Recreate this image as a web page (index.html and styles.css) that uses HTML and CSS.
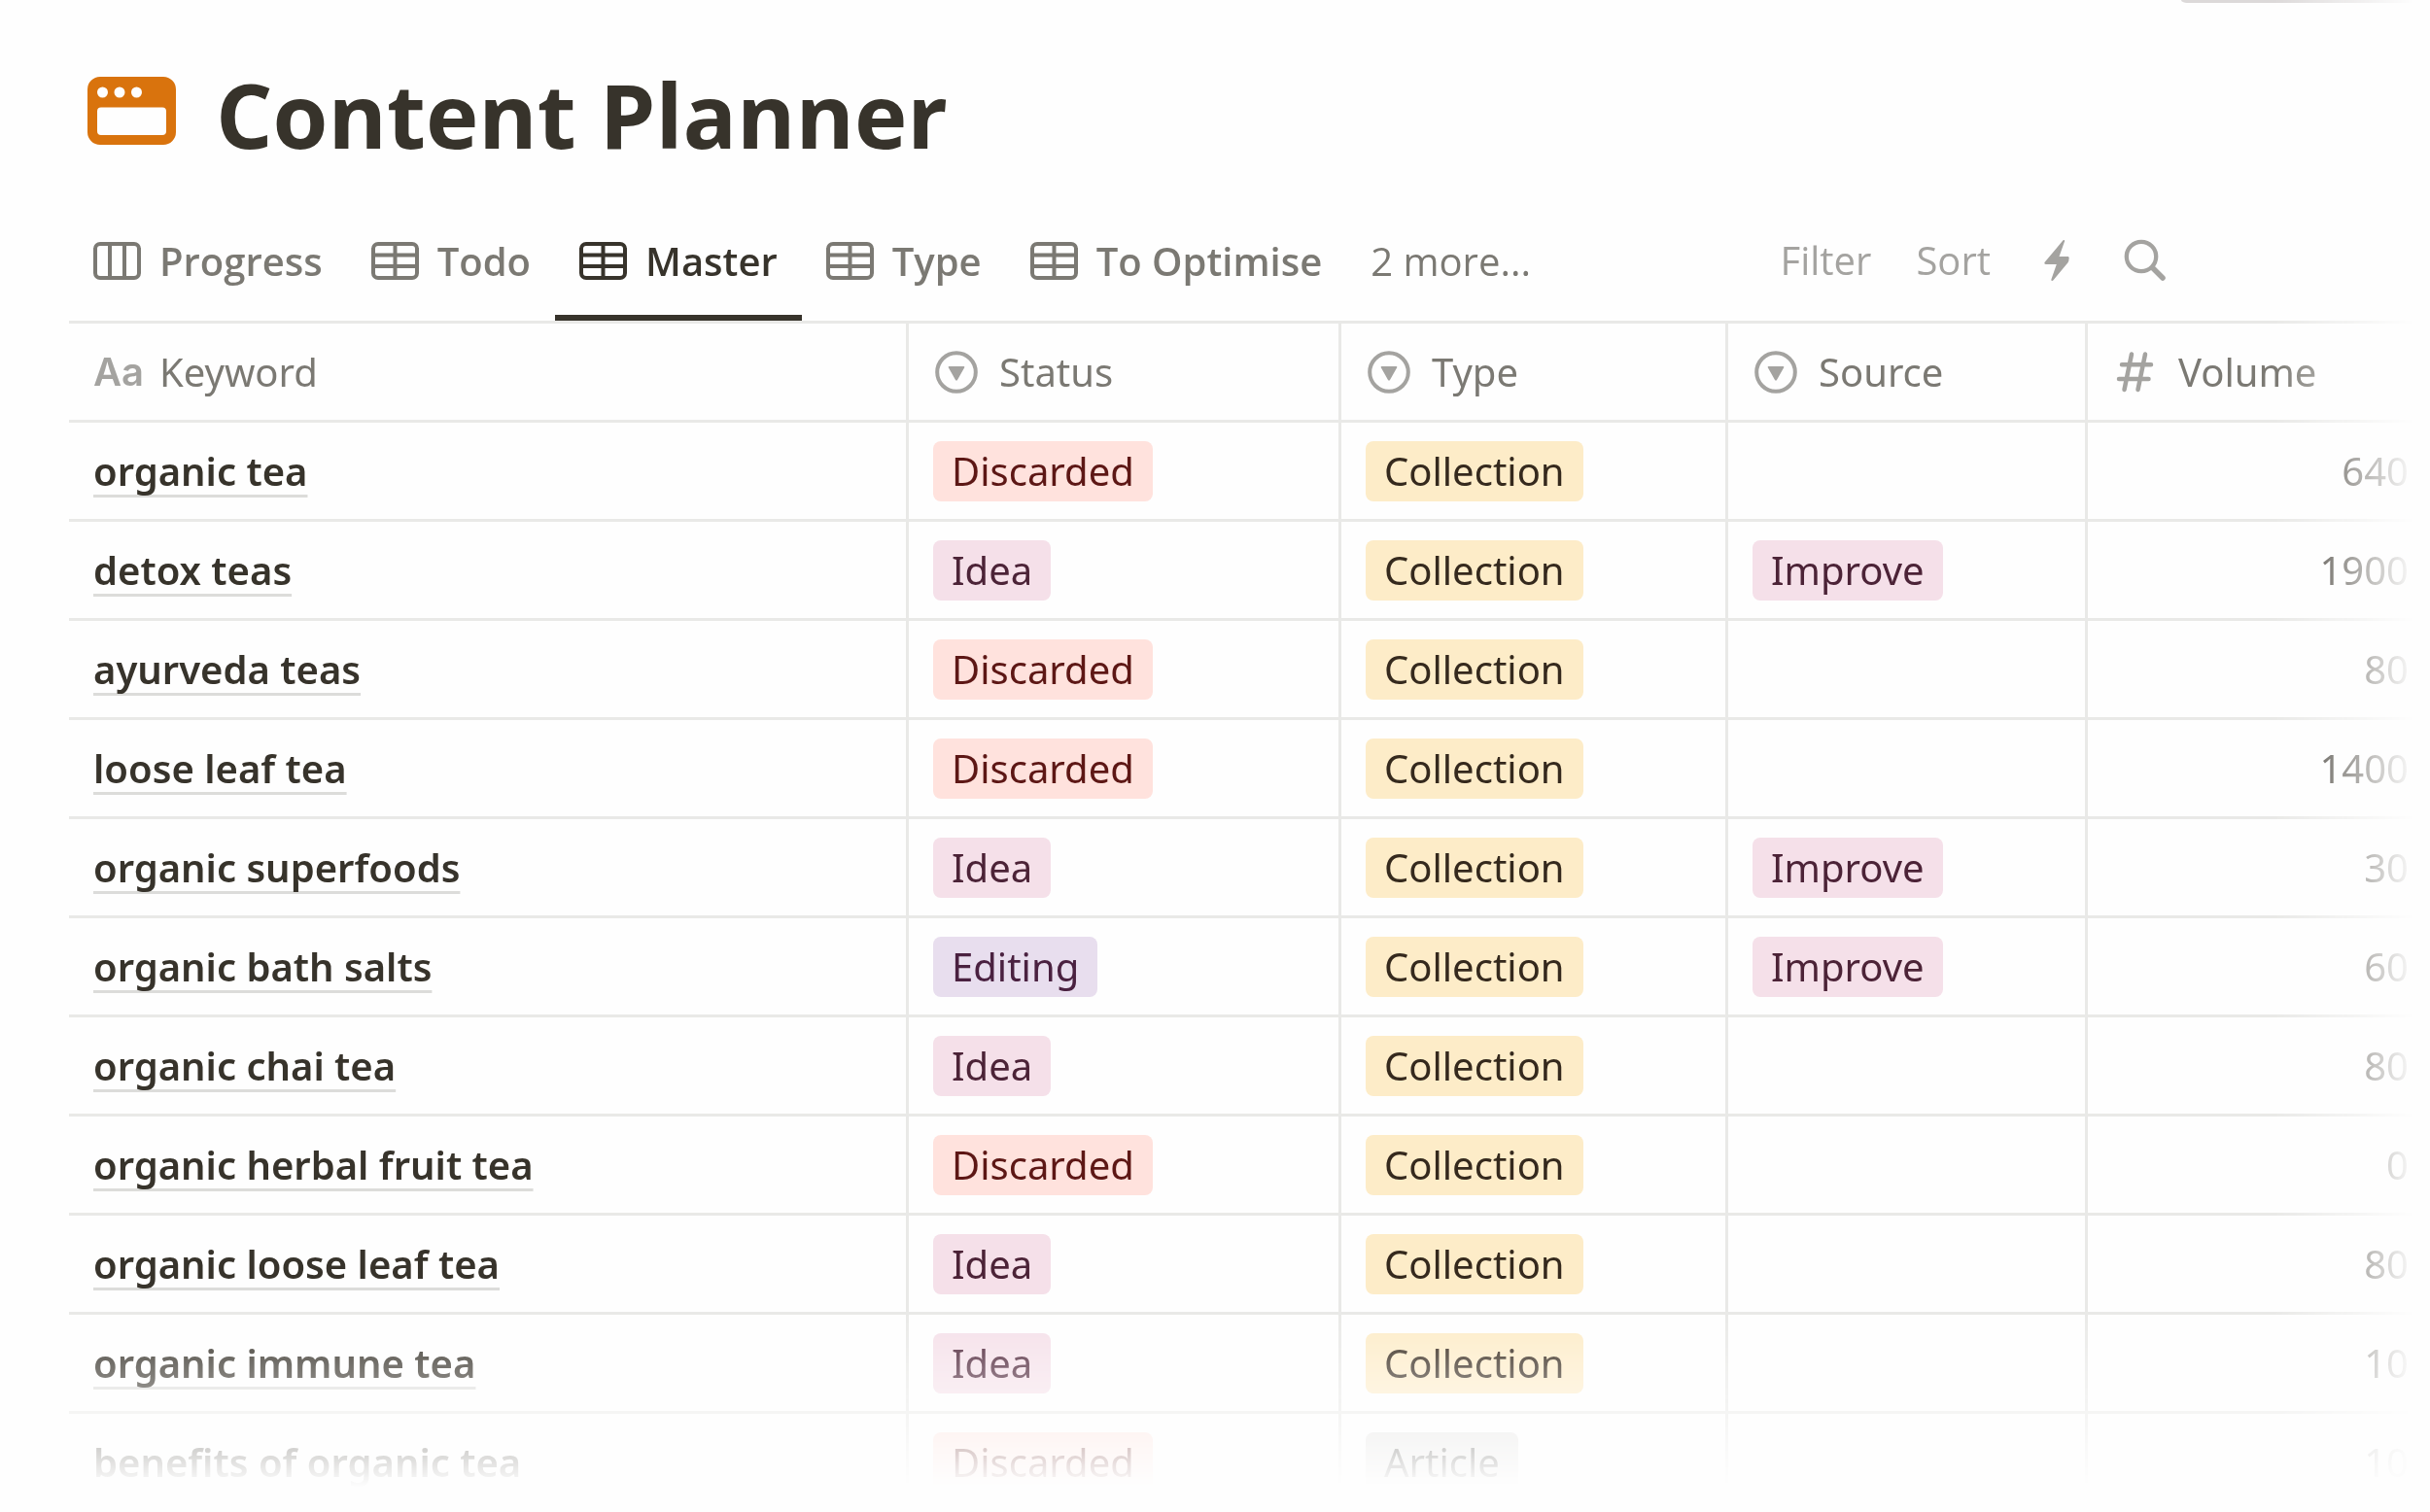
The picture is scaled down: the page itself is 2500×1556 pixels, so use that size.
FILE: index.html
```
<!DOCTYPE html>
<html lang="en">
<head>
<meta charset="utf-8">
<meta name="viewport" content="width=device-width, initial-scale=1">
<title>Content Planner</title>
<link rel="stylesheet" href="styles.css">
</head>
<body>
<svg class="sprite" aria-hidden="true">
  <symbol id="i-board" viewBox="0 0 49 39"><g fill="none" stroke="currentColor" stroke-width="4"><rect x="2" y="2" width="45" height="35" rx="5"/><path d="M17 2v35M32 2v35"/></g></symbol>
  <symbol id="i-table" viewBox="0 0 49 39"><g fill="none" stroke="currentColor" stroke-width="4"><rect x="2" y="2" width="45" height="35" rx="5"/><path d="M24.500 2v35M2 13.500h45M2 25h45"/></g></symbol>
  <symbol id="i-select" viewBox="0 0 44 44"><circle cx="22" cy="22" r="19.800" fill="none" stroke="currentColor" stroke-width="4"/><path d="M14.500 16h15a.8.8 0 0 1 .7 1.300l-7.200 12.600a1.150 1.150 0 0 1-2 0l-7.200-12.600a.8.8 0 0 1 .7-1.300z" fill="currentColor"/></symbol>
  <symbol id="i-hash" viewBox="0 0 44 44"><path d="M18 3.500L10.500 40M32 3.500L24.500 40M8 14.300h30M5 29h30.500" fill="none" stroke="currentColor" stroke-width="4.500" stroke-linecap="round"/></symbol>
  <symbol id="i-bolt" viewBox="0 0 44 44"><path d="M28.300 1.600c.5-1.100 2.200-.6 1.800.7L24.500 18h8.700c1.300 0 1.900 1.200 1.300 2.300 0 1.500-.2 2.900-1 3.900L18.300 42.500c-.8 1-2.300.3-1.900-.9L21.800 26H10.700c-1.300 0-1.800-1.200-1-2.200z" fill="currentColor"/></symbol>
  <symbol id="i-search" viewBox="0 0 44 44"><g fill="none" stroke="currentColor" stroke-linecap="round"><circle cx="19" cy="18" r="15.200" stroke-width="4.300"/><path d="M31 30l10 10" stroke-width="5.500"/></g></symbol>
</svg>

<div class="page">
  <div class="popover-edge"></div>
  <header class="hero">
    <svg class="hero-icon" viewBox="0 0 91 70" aria-hidden="true"><path fill="#d9730d" fill-rule="evenodd" d="M13 0h65a13 13 0 0 1 13 13v44a13 13 0 0 1-13 13H13A13 13 0 0 1 0 57V13A13 13 0 0 1 13 0zM15.500 10.500a5.500 5.500 0 1 0 0 11 5.500 5.500 0 0 0 0-11zm17.500 0a5.500 5.500 0 1 0 0 11 5.500 5.500 0 0 0 0-11zm17.500 0a5.500 5.500 0 1 0 0 11 5.500 5.500 0 0 0 0-11zM14 31.500a4 4 0 0 0-4 4V56a4 4 0 0 0 4 4h63a4 4 0 0 0 4-4V35.500a4 4 0 0 0-4-4z"/></svg>
    <h1>Content Planner</h1>
  </header>

  <div class="toolbar">
    <div class="tabs" role="tablist">
      <button class="tab" role="tab"><svg class="tab-icon"><use href="#i-board"/></svg>Progress</button>
      <button class="tab" role="tab"><svg class="tab-icon"><use href="#i-table"/></svg>Todo</button>
      <button class="tab active" role="tab" aria-selected="true"><svg class="tab-icon"><use href="#i-table"/></svg>Master</button>
      <button class="tab" role="tab"><svg class="tab-icon"><use href="#i-table"/></svg>Type</button>
      <button class="tab" role="tab"><svg class="tab-icon"><use href="#i-table"/></svg>To Optimise</button>
      <button class="tab more">2 more...</button>
    </div>
    <div class="actions">
      <button>Filter</button>
      <button>Sort</button>
      <button aria-label="Automations"><svg class="icon"><use href="#i-bolt"/></svg></button>
      <button aria-label="Search"><svg class="icon"><use href="#i-search"/></svg></button>
    </div>
  </div>

  <table class="grid">
    <colgroup><col class="c-keyword"><col class="c-status"><col class="c-type"><col class="c-source"><col></colgroup>
    <thead>
      <tr>
        <th scope="col"><div class="head"><span class="aa">Aa</span>Keyword</div></th>
        <th scope="col"><div class="head prop"><svg class="icon"><use href="#i-select"/></svg>Status</div></th>
        <th scope="col"><div class="head prop"><svg class="icon"><use href="#i-select"/></svg>Type</div></th>
        <th scope="col"><div class="head prop"><svg class="icon"><use href="#i-select"/></svg>Source</div></th>
        <th scope="col"><div class="head prop"><svg class="icon"><use href="#i-hash"/></svg>Volume</div></th>
      </tr>
    </thead>
    <tbody>
      <tr><td><a href="#">organic tea</a></td><td><span class="tag red">Discarded</span></td><td><span class="tag yellow">Collection</span></td><td></td><td class="num">640</td></tr>
      <tr><td><a href="#">detox teas</a></td><td><span class="tag pink">Idea</span></td><td><span class="tag yellow">Collection</span></td><td><span class="tag pink">Improve</span></td><td class="num">1900</td></tr>
      <tr><td><a href="#">ayurveda teas</a></td><td><span class="tag red">Discarded</span></td><td><span class="tag yellow">Collection</span></td><td></td><td class="num">80</td></tr>
      <tr><td><a href="#">loose leaf tea</a></td><td><span class="tag red">Discarded</span></td><td><span class="tag yellow">Collection</span></td><td></td><td class="num">1400</td></tr>
      <tr><td><a href="#">organic superfoods</a></td><td><span class="tag pink">Idea</span></td><td><span class="tag yellow">Collection</span></td><td><span class="tag pink">Improve</span></td><td class="num">30</td></tr>
      <tr><td><a href="#">organic bath salts</a></td><td><span class="tag purple">Editing</span></td><td><span class="tag yellow">Collection</span></td><td><span class="tag pink">Improve</span></td><td class="num">60</td></tr>
      <tr><td><a href="#">organic chai tea</a></td><td><span class="tag pink">Idea</span></td><td><span class="tag yellow">Collection</span></td><td></td><td class="num">80</td></tr>
      <tr><td><a href="#">organic herbal fruit tea</a></td><td><span class="tag red">Discarded</span></td><td><span class="tag yellow">Collection</span></td><td></td><td class="num">0</td></tr>
      <tr><td><a href="#">organic loose leaf tea</a></td><td><span class="tag pink">Idea</span></td><td><span class="tag yellow">Collection</span></td><td></td><td class="num">80</td></tr>
      <tr><td><a href="#">organic immune tea</a></td><td><span class="tag pink">Idea</span></td><td><span class="tag yellow">Collection</span></td><td></td><td class="num">10</td></tr>
      <tr><td><a href="#">benefits of organic tea</a></td><td><span class="tag red">Discarded</span></td><td><span class="tag gray">Article</span></td><td></td><td class="num">10</td></tr>
    </tbody>
  </table>
</div>
</body>
</html>
```
FILE: styles.css
```
:root {
  --bg: #fefefe;
  --ink: #37332b;
  --muted: #7b7973;
  --faint: #a4a3a0;
  --line: #e9e9e7;
}

* { box-sizing: border-box; }

html { background: var(--bg); }

body {
  margin: 0;
  color: var(--ink);
  font: 400 40px/56px "Open Sans", "Noto Sans", sans-serif;
}

button {
  padding: 0;
  border: 0;
  background: none;
  color: inherit;
  font: inherit;
  cursor: pointer;
}

svg { display: block; flex: none; }

.sprite { position: absolute; width: 0; height: 0; }

/* The page dissolves towards its right and bottom edges. */
.page {
  position: relative;
  min-height: 100vh;
  padding: 58px 0 0 71px;
  overflow: hidden;
  mask-image:
    linear-gradient(to right, #000 calc(100% - 160px), transparent calc(100% - 16px)),
    linear-gradient(to bottom, #000 calc(100% - 206px), transparent calc(100% - 26px));
  mask-composite: intersect;
}

/* Lower edge of a floating panel that sits above the visible area. */
.popover-edge {
  position: absolute;
  top: 0;
  right: 0;
  width: 256px;
  height: 3px;
  border-bottom-left-radius: 6px 3px;
  background: #dcd9d9;
}

.hero {
  display: flex;
  align-items: center;
  gap: 41px;
  height: 152px;
  padding: 0 0 32px 19px;
}

.hero-icon { width: 91px; height: 70px; margin-bottom: 8px; }

h1 {
  margin: 0;
  font-size: 92px;
  font-weight: 700;
  line-height: 120px;
}

.toolbar {
  display: flex;
  justify-content: space-between;
  padding-right: 272px;
  border-bottom: 3px solid var(--line);
}

.tabs, .actions { display: flex; align-items: center; }

.tab {
  display: flex;
  align-items: center;
  gap: 19px;
  height: 120px;
  padding: 3px 25px 0;
  border-bottom: 6px solid transparent;
  color: var(--muted);
  font-weight: 600;
  white-space: nowrap;
}

.tab.active { border-bottom-color: var(--ink); color: var(--ink); }
.tab.more { font-weight: 400; }
.tab-icon { width: 49px; height: 39px; }

.actions {
  gap: 46px;
  padding-bottom: 4px;
  color: var(--faint);
}

.icon { width: 44px; height: 44px; }

.grid {
  width: 100%;
  table-layout: fixed;
  border-collapse: separate;
  border-spacing: 0;
  font-family: "Noto Sans", "Open Sans", sans-serif;
}

.c-keyword { width: 861px; }
.c-status { width: 445px; }
.c-type { width: 398px; }
.c-source { width: 370px; }

th, td {
  height: 102px;
  padding: 0 22px 0 25px;
  border-bottom: 3px solid var(--line);
  text-align: left;
  vertical-align: middle;
  white-space: nowrap;
}

th + th, td + td { border-left: 3px solid var(--line); }
tbody tr:last-child td { height: 99px; border-bottom: 0; }

th { color: var(--muted); font-weight: 400; }

.head { display: flex; align-items: center; gap: 18px; }
.head.prop { gap: 22px; padding-left: 2px; }
.head .icon { color: var(--faint); }

.aa {
  width: 50px;
  color: var(--faint);
  font-family: Inter, sans-serif;
  font-weight: 600;
}

td a {
  color: inherit;
  font-weight: 600;
  text-decoration: underline 3px #dcdcda;
  text-decoration-skip-ink: none;
  text-underline-offset: 9px;
}

.tag {
  display: block;
  width: fit-content;
  padding: 0 19px;
  border-radius: 8px;
  line-height: 62px;
}

.red { background: #ffe2dd; color: #5d1715; }
.pink { background: #f5e0e9; color: #4c2337; }
.purple { background: #e8deee; color: #4a2140; }
.yellow { background: #fdecc8; color: #35291d; }
.gray { background: #e3e2e0; color: #32302c; }

.num { text-align: right; }
```
